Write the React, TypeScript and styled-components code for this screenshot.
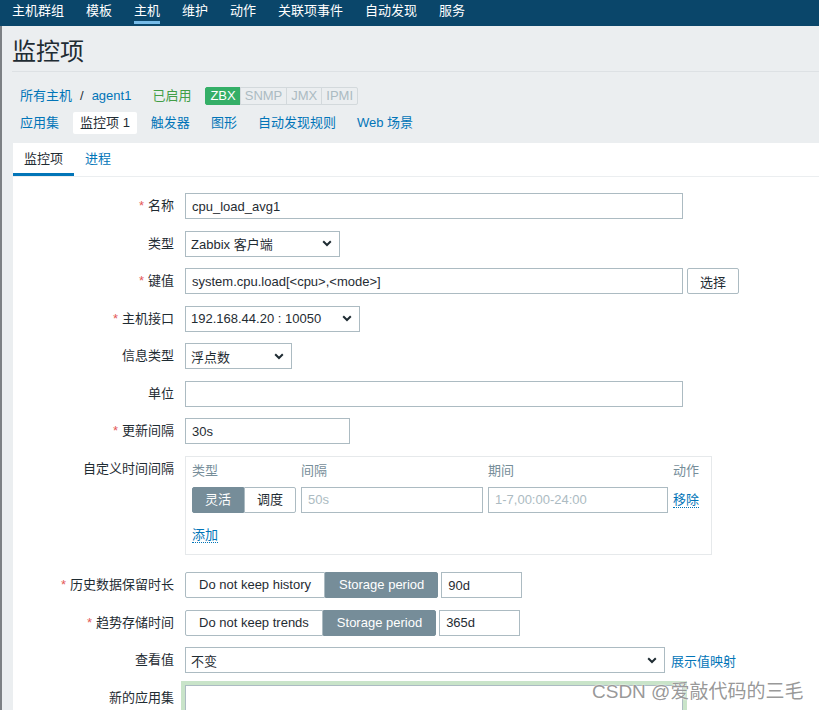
import React from "react";
import styled, { createGlobalStyle } from "styled-components";

const GlobalStyle = createGlobalStyle`
  html, body {
    margin: 0;
    padding: 0;
    background: #ebeef0;
  }
  body {
    font-family: "Liberation Sans", "Noto Sans CJK SC", sans-serif;
    font-size: 13px;
    color: #1f2c33;
    overflow: hidden;
  }
  * {
    box-sizing: border-box;
  }
`;

const LINK = "#0275b8";

const Page = styled.div`
  position: relative;
  min-height: 100vh;
`;

const TopNav = styled.nav`
  display: flex;
  height: 26px;
  padding-left: 1px;
  background: #0a466a;
`;

const NavItem = styled.a<{ $active?: boolean }>`
  display: block;
  padding: 0 11px;
  color: #fff;
  text-decoration: none;
  span {
    display: block;
    height: 24px;
    line-height: 21px;
    border-bottom: 3px solid ${(p) => (p.$active ? "#76bbe8" : "transparent")};
  }
`;

const Body = styled.div`
  border-left: 2px solid #7c8084;
  min-height: calc(100vh - 26px);
`;

const TitleBar = styled.h1`
  margin: 0 0 0 10px;
  height: 46px;
  padding-top: 6px;
  line-height: 39px;
  font-size: 24px;
  font-weight: normal;
  border-bottom: 1px solid #dde1e4;
`;

const Crumbs = styled.div`
  display: flex;
  align-items: center;
  height: 18px;
  margin-top: 15px;
  padding-left: 18px;
  line-height: 18px;
`;

const Link = styled.a<{ $dotted?: boolean }>`
  color: ${LINK};
  text-decoration: none;
  border-bottom: ${(p) => (p.$dotted ? `1px dotted ${LINK}` : "none")};
  line-height: ${(p) => (p.$dotted ? "15px" : "inherit")};
`;

const Slash = styled.span`
  margin: 0 8px;
`;

const Enabled = styled.span`
  margin: 0 14px 0 21px;
  color: #429e47;
`;

const Badges = styled.div`
  display: flex;
  height: 18px;
`;

const Badge = styled.span<{ $on?: boolean }>`
  padding: 0 4px;
  height: 18px;
  line-height: 16px;
  border: 1px solid ${(p) => (p.$on ? "#34af67" : "#d3d9dc")};
  background: ${(p) => (p.$on ? "#34af67" : "#ebeef0")};
  color: ${(p) => (p.$on ? "#fff" : "#acbbc2")};
  &:first-child {
    border-radius: 2px 0 0 2px;
  }
  &:last-child {
    border-radius: 0 2px 2px 0;
  }
  & + & {
    margin-left: -1px;
  }
`;

const SubTabs = styled.div`
  display: flex;
  gap: 7px;
  margin-top: 7px;
  padding-left: 11px;
`;

const SubTab = styled.a<{ $active?: boolean }>`
  display: block;
  height: 22px;
  padding: 0 7px;
  line-height: 22px;
  text-decoration: none;
  border-radius: 2px;
  color: ${(p) => (p.$active ? "#1f2c33" : LINK)};
  background: ${(p) => (p.$active ? "#fff" : "transparent")};
`;

const Panel = styled.section`
  margin: 9px 0 0 11px;
  background: #fff;
  min-height: 560px;
`;

const PanelTabs = styled.div`
  display: flex;
  height: 34px;
  border-bottom: 1px solid #ebeef0;
`;

const PanelTab = styled.a<{ $active?: boolean }>`
  display: block;
  height: 33px;
  padding: 0 11px;
  line-height: 32px;
  text-decoration: none;
  color: ${(p) => (p.$active ? "#1f2c33" : LINK)};
  border-bottom: 3px solid ${(p) => (p.$active ? LINK : "transparent")};
`;

const Form = styled.div`
  padding-top: 16px;
`;

const Row = styled.div<{ $after?: number }>`
  display: grid;
  grid-template-columns: 161px 1fr;
  column-gap: 11px;
  margin-bottom: ${(p) => p.$after ?? 11.5}px;
`;

const Label = styled.label`
  text-align: right;
  line-height: 26px;
  white-space: nowrap;
`;

const Star = styled.span`
  color: #e45959;
  margin-right: 4px;
`;

const Controls = styled.div`
  display: flex;
  align-items: center;
`;

const Input = styled.input<{ $w: number; $glow?: boolean; $h?: number }>`
  width: ${(p) => p.$w}px;
  height: ${(p) => p.$h ?? 26}px;
  padding: 0 6px;
  border: 1px solid #acbbc2;
  background: #fff;
  font: inherit;
  color: #1f2c33;
  outline: none;
  box-shadow: ${(p) => (p.$glow ? "0 0 0 4px #c9e4c9" : "none")};
  &::placeholder {
    color: #acbbc2;
  }
`;

const SelectBox = styled.div<{ $w: number }>`
  display: flex;
  align-items: center;
  justify-content: space-between;
  width: ${(p) => p.$w}px;
  height: 26px;
  padding: 0 7px 0 5px;
  border: 1px solid #acbbc2;
  background: #fff;
  white-space: nowrap;
`;

const Button = styled.button`
  height: 26px;
  margin-left: 4px;
  padding: 0 12px;
  border: 1px solid #acbbc2;
  border-radius: 2px;
  background: #fff;
  font: inherit;
  color: #1f2c33;
`;

const Seg = styled.div`
  display: inline-flex;
`;

const SegBtn = styled.span<{ $active?: boolean; $wide?: boolean }>`
  display: block;
  height: 26px;
  padding: 0 ${(p) => (p.$wide ? 13 : 12)}px;
  line-height: 24px;
  white-space: nowrap;
  border: 1px solid ${(p) => (p.$active ? "#768d99" : "#acbbc2")};
  background: ${(p) => (p.$active ? "#768d99" : "#fff")};
  color: ${(p) => (p.$active ? "#fff" : "#1f2c33")};
  &:first-child {
    border-radius: 2px 0 0 2px;
  }
  &:last-child {
    border-radius: 0 2px 2px 0;
  }
`;

const IntervalBox = styled.div`
  width: 527px;
  padding: 4px 11px 11px 6px;
  border: 1px solid #e6e9eb;
`;

const IntervalGrid = styled.div`
  display: grid;
  grid-template-columns: 104px 182px 180px auto;
  column-gap: 5px;
  row-gap: 6px;
  align-items: center;
`;

const ColHead = styled.div`
  line-height: 20px;
  color: #768d99;
`;

const AddRow = styled.div`
  margin-top: 14px;
  line-height: 16px;
`;

const Gap = styled.span<{ $w: number }>`
  display: inline-block;
  width: ${(p) => p.$w}px;
`;

const Watermark = styled.div`
  position: absolute;
  left: 592px;
  top: 678px;
  font-family: "Liberation Sans", "Noto Sans CJK SC", sans-serif;
  font-size: 19px;
  line-height: 28px;
  color: rgba(125, 125, 125, 0.8);
  text-shadow: 0 0 2px #fff, 0 0 1px #fff;
  white-space: nowrap;
`;

function Chevron() {
  return (
    <svg width="10" height="7" viewBox="0 0 10 7">
      <path d="M1.2 1.3 L5 5 L8.8 1.3" fill="none" stroke="#1f2c33" strokeWidth="2" />
    </svg>
  );
}

function Select(props: { w: number; value: string }) {
  return (
    <SelectBox $w={props.w}>
      <span>{props.value}</span>
      <Chevron />
    </SelectBox>
  );
}

function FieldLabel(props: { text: string; required?: boolean }) {
  return (
    <Label>
      {props.required && <Star>*</Star>}
      {props.text}
    </Label>
  );
}

const navItems = ["主机群组", "模板", "主机", "维护", "动作", "关联项事件", "自动发现", "服务"];
const subTabs = ["应用集", "监控项 1", "触发器", "图形", "自动发现规则", "Web 场景"];

export default function App() {
  return (
    <Page>
      <GlobalStyle />
      <TopNav>
        {navItems.map((n) => (
          <NavItem key={n} $active={n === "主机"}>
            <span>{n}</span>
          </NavItem>
        ))}
      </TopNav>
      <Body>
        <TitleBar>监控项</TitleBar>
        <Crumbs>
          <Link>所有主机</Link>
          <Slash>/</Slash>
          <Link>agent1</Link>
          <Enabled>已启用</Enabled>
          <Badges>
            <Badge $on>ZBX</Badge>
            <Badge>SNMP</Badge>
            <Badge>JMX</Badge>
            <Badge>IPMI</Badge>
          </Badges>
        </Crumbs>
        <SubTabs>
          {subTabs.map((t) => (
            <SubTab key={t} $active={t === "监控项 1"}>
              {t}
            </SubTab>
          ))}
        </SubTabs>
        <Panel>
          <PanelTabs>
            <PanelTab $active>监控项</PanelTab>
            <PanelTab>进程</PanelTab>
          </PanelTabs>
          <Form>
            <Row>
              <FieldLabel text="名称" required />
              <Controls>
                <Input $w={498} defaultValue="cpu_load_avg1" readOnly />
              </Controls>
            </Row>
            <Row>
              <FieldLabel text="类型" />
              <Controls>
                <Select w={155} value="Zabbix 客户端" />
              </Controls>
            </Row>
            <Row>
              <FieldLabel text="键值" required />
              <Controls>
                <Input $w={498} defaultValue="system.cpu.load[<cpu>,<mode>]" readOnly />
                <Button>选择</Button>
              </Controls>
            </Row>
            <Row>
              <FieldLabel text="主机接口" required />
              <Controls>
                <Select w={175} value="192.168.44.20 : 10050" />
              </Controls>
            </Row>
            <Row>
              <FieldLabel text="信息类型" />
              <Controls>
                <Select w={107} value="浮点数" />
              </Controls>
            </Row>
            <Row>
              <FieldLabel text="单位" />
              <Controls>
                <Input $w={498} defaultValue="" readOnly />
              </Controls>
            </Row>
            <Row>
              <FieldLabel text="更新间隔" required />
              <Controls>
                <Input $w={165} defaultValue="30s" readOnly />
              </Controls>
            </Row>
            <Row $after={17.5}>
              <FieldLabel text="自定义时间间隔" />
              <div>
                <IntervalBox>
                  <IntervalGrid>
                    <ColHead>类型</ColHead>
                    <ColHead>间隔</ColHead>
                    <ColHead>期间</ColHead>
                    <ColHead>动作</ColHead>
                    <Seg>
                      <SegBtn $active>灵活</SegBtn>
                      <SegBtn>调度</SegBtn>
                    </Seg>
                    <Input $w={182} placeholder="50s" readOnly />
                    <Input $w={180} placeholder="1-7,00:00-24:00" readOnly />
                    <div>
                      <Link $dotted>移除</Link>
                    </div>
                  </IntervalGrid>
                  <AddRow>
                    <Link $dotted>添加</Link>
                  </AddRow>
                </IntervalBox>
              </div>
            </Row>
            <Row>
              <FieldLabel text="历史数据保留时长" required />
              <Controls>
                <Seg>
                  <SegBtn $wide>Do not keep history</SegBtn>
                  <SegBtn $wide $active>Storage period</SegBtn>
                </Seg>
                <Gap $w={3} />
                <Input $w={81} defaultValue="90d" readOnly />
              </Controls>
            </Row>
            <Row>
              <FieldLabel text="趋势存储时间" required />
              <Controls>
                <Seg>
                  <SegBtn $wide>Do not keep trends</SegBtn>
                  <SegBtn $wide $active>Storage period</SegBtn>
                </Seg>
                <Gap $w={3} />
                <Input $w={81} defaultValue="365d" readOnly />
              </Controls>
            </Row>
            <Row>
              <FieldLabel text="查看值" />
              <Controls>
                <Select w={480} value="不变" />
                <Gap $w={6} />
                <Link>展示值映射</Link>
              </Controls>
            </Row>
            <Row>
              <FieldLabel text="新的应用集" />
              <Controls>
                <Input $w={498} $h={60} $glow defaultValue="" readOnly />
              </Controls>
            </Row>
          </Form>
        </Panel>
      </Body>
      <Watermark>CSDN @爱敲代码的三毛</Watermark>
    </Page>
  );
}
